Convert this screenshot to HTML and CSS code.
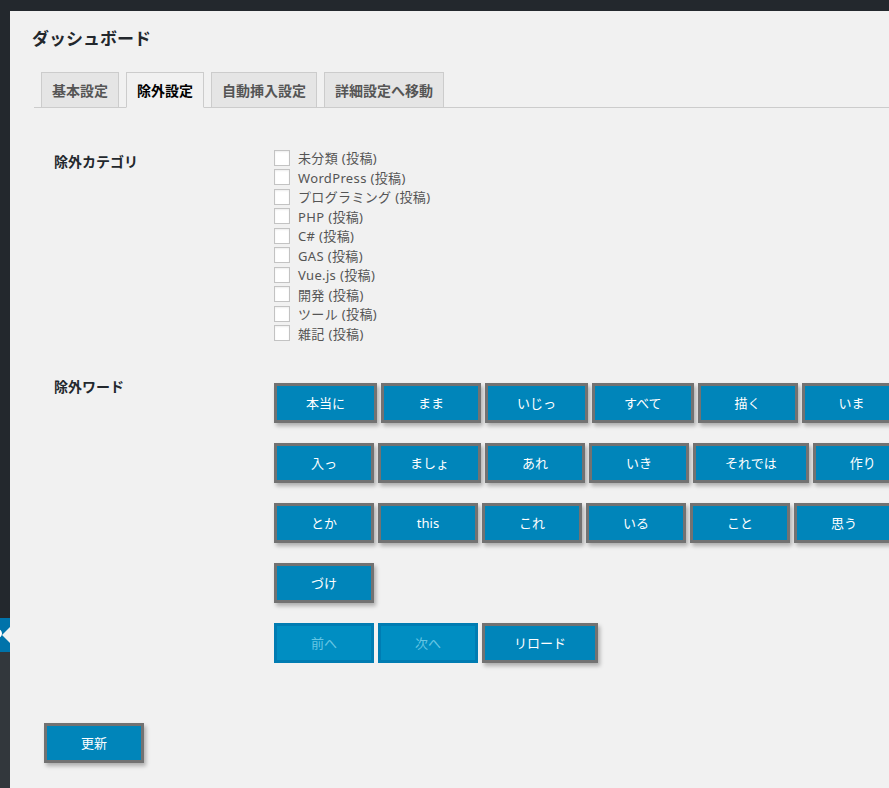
FILE: index.html
```html
<!DOCTYPE html>
<html lang="ja">
<head>
<meta charset="utf-8">
<title>ダッシュボード</title>
<link rel="stylesheet" href="styles.css">
</head>
<body>
<div class="adminbar"></div>
<div class="layout">
  <nav class="sidebar">
    <div class="menu-top"></div>
    <div class="menu-current"><span class="menu-icon"></span><span class="menu-arrow"></span></div>
    <div class="submenu"></div>
  </nav>
  <main class="main">
    <div class="wrap">
      <h1 class="page-title">ダッシュボード</h1>
      <div class="tabs">
        <a class="tab">基本設定</a>
        <a class="tab tab-active">除外設定</a>
        <a class="tab">自動挿入設定</a>
        <a class="tab">詳細設定へ移動</a>
      </div>
      <form class="settings">
        <div class="field field-cats">
          <div class="field-label">除外カテゴリ</div>
          <div class="checklist">
            <label class="check"><input type="checkbox"><span>未分類 (投稿)</span></label>
            <label class="check"><input type="checkbox"><span>WordPress (投稿)</span></label>
            <label class="check"><input type="checkbox"><span>プログラミング (投稿)</span></label>
            <label class="check"><input type="checkbox"><span>PHP (投稿)</span></label>
            <label class="check"><input type="checkbox"><span>C# (投稿)</span></label>
            <label class="check"><input type="checkbox"><span>GAS (投稿)</span></label>
            <label class="check"><input type="checkbox"><span>Vue.js (投稿)</span></label>
            <label class="check"><input type="checkbox"><span>開発 (投稿)</span></label>
            <label class="check"><input type="checkbox"><span>ツール (投稿)</span></label>
            <label class="check"><input type="checkbox"><span>雑記 (投稿)</span></label>
          </div>
        </div>
        <div class="field field-words">
          <div class="field-label">除外ワード</div>
          <div class="words-area">
            <div class="words">
              <button type="button" class="btn">本当に</button>
              <button type="button" class="btn">まま</button>
              <button type="button" class="btn">いじっ</button>
              <button type="button" class="btn">すべて</button>
              <button type="button" class="btn">描く</button>
              <button type="button" class="btn">いま</button>
              <button type="button" class="btn">入っ</button>
              <button type="button" class="btn">ましょ</button>
              <button type="button" class="btn">あれ</button>
              <button type="button" class="btn">いき</button>
              <button type="button" class="btn">それでは</button>
              <button type="button" class="btn">作り</button>
              <button type="button" class="btn">とか</button>
              <button type="button" class="btn">this</button>
              <button type="button" class="btn">これ</button>
              <button type="button" class="btn">いる</button>
              <button type="button" class="btn">こと</button>
              <button type="button" class="btn">思う</button>
              <button type="button" class="btn">づけ</button>
            </div>
            <div class="pager">
              <button type="button" class="btn" disabled>前へ</button>
              <button type="button" class="btn" disabled>次へ</button>
              <button type="button" class="btn">リロード</button>
            </div>
          </div>
        </div>
        <div class="submit">
          <button type="submit" class="btn">更新</button>
        </div>
      </form>
    </div>
  </main>
</div>
</body>
</html>
```
FILE: styles.css
```css
html, body {
  margin: 0;
  padding: 0;
  overflow: hidden;
}
body {
  background: #f1f1f1;
  color: #444;
  font-family: "Noto Sans", "Noto Sans CJK JP", sans-serif;
  font-size: 13px;
}
.adminbar {
  height: 11px;
  background: #23282d;
}
.layout {
  display: flex;
  height: calc(100vh - 11px);
}
.sidebar {
  width: 10px;
  flex: none;
  display: flex;
  flex-direction: column;
}
.menu-top {
  height: 607px;
  background: #23282d;
}
.menu-current {
  position: relative;
  height: 34px;
  background: #0073aa;
  overflow: hidden;
}
.menu-icon {
  position: absolute;
  left: -7px;
  top: 11px;
  width: 5px;
  height: 5px;
  border: 2px solid #fff;
  border-radius: 50%;
}
.menu-arrow {
  position: absolute;
  right: 0;
  top: 50%;
  margin-top: -8px;
  width: 0;
  height: 0;
  border: 8px solid transparent;
  border-right-color: #f1f1f1;
}
.submenu {
  flex: 1;
  background: #32373c;
}
.main {
  flex: 1;
  min-width: 0;
  overflow: hidden;
}
.wrap {
  padding: 15px 0 0 22px;
}
.page-title {
  margin: 0;
  font-size: 17px;
  line-height: 24px;
  font-weight: 700;
  color: #23282d;
  font-family: "Noto Sans CJK JP", sans-serif;
}
.tabs {
  margin: 22px 0 0 2px;
  display: flex;
  align-items: flex-end;
  border-bottom: 1px solid #ccc;
}
.tab {
  margin-left: 7px;
  padding: 5px 10px;
  line-height: 24px;
  font-size: 14px;
  font-weight: 700;
  color: #555;
  background: #e5e5e5;
  border: 1px solid #ccc;
  border-bottom: none;
  font-family: "Noto Sans CJK JP", sans-serif;
  white-space: nowrap;
}
.tab-active {
  color: #000;
  background: #f1f1f1;
  border-bottom: 1px solid #f1f1f1;
  margin-bottom: -1px;
}
.settings {
  margin-top: 40px;
}
.field {
  display: grid;
  grid-template-columns: 220px 1fr;
  padding-left: 22px;
}
.field-label {
  font-size: 14px;
  line-height: 20px;
  font-weight: 700;
  color: #23282d;
  font-family: "Noto Sans CJK JP", sans-serif;
}
.field-cats .field-label {
  margin-top: 3px;
}
.checklist {
  display: flex;
  flex-direction: column;
}
.check {
  display: flex;
  align-items: center;
  gap: 8px;
  height: 19.5px;
  color: #555;
  letter-spacing: 0.35px;
  white-space: nowrap;
}
.check input {
  appearance: none;
  -webkit-appearance: none;
  margin: 0;
  width: 16px;
  height: 16px;
  background: #fff;
  border: 1px solid #c3c3c3;
  box-shadow: inset 0 1px 2px rgba(0, 0, 0, 0.07);
  box-sizing: border-box;
}
.field-words {
  margin-top: 33px;
}
.words-area {
  padding-top: 7px;
}
.words {
  width: 645px;
  display: flex;
  flex-wrap: wrap;
  gap: 20px 4px;
}
.pager {
  margin-top: 20px;
  display: flex;
  gap: 4px;
}
.btn {
  box-sizing: border-box;
  height: 40px;
  min-width: 100px;
  padding: 0 29px;
  margin: 0;
  border: 3px solid #727272;
  border-radius: 0;
  background: #0085ba;
  color: #fff;
  font-family: "Noto Sans", "Noto Sans CJK JP", sans-serif;
  font-size: 13px;
  line-height: 34px;
  white-space: nowrap;
  box-shadow: 2px 3px 4px rgba(0, 0, 0, 0.28);
  cursor: pointer;
}
.btn:disabled {
  background: #008ec2;
  border-color: #007cb2;
  color: #66c6e4;
  box-shadow: none;
  cursor: default;
}
.submit {
  margin-top: 60px;
  padding-left: 12px;
}
```
